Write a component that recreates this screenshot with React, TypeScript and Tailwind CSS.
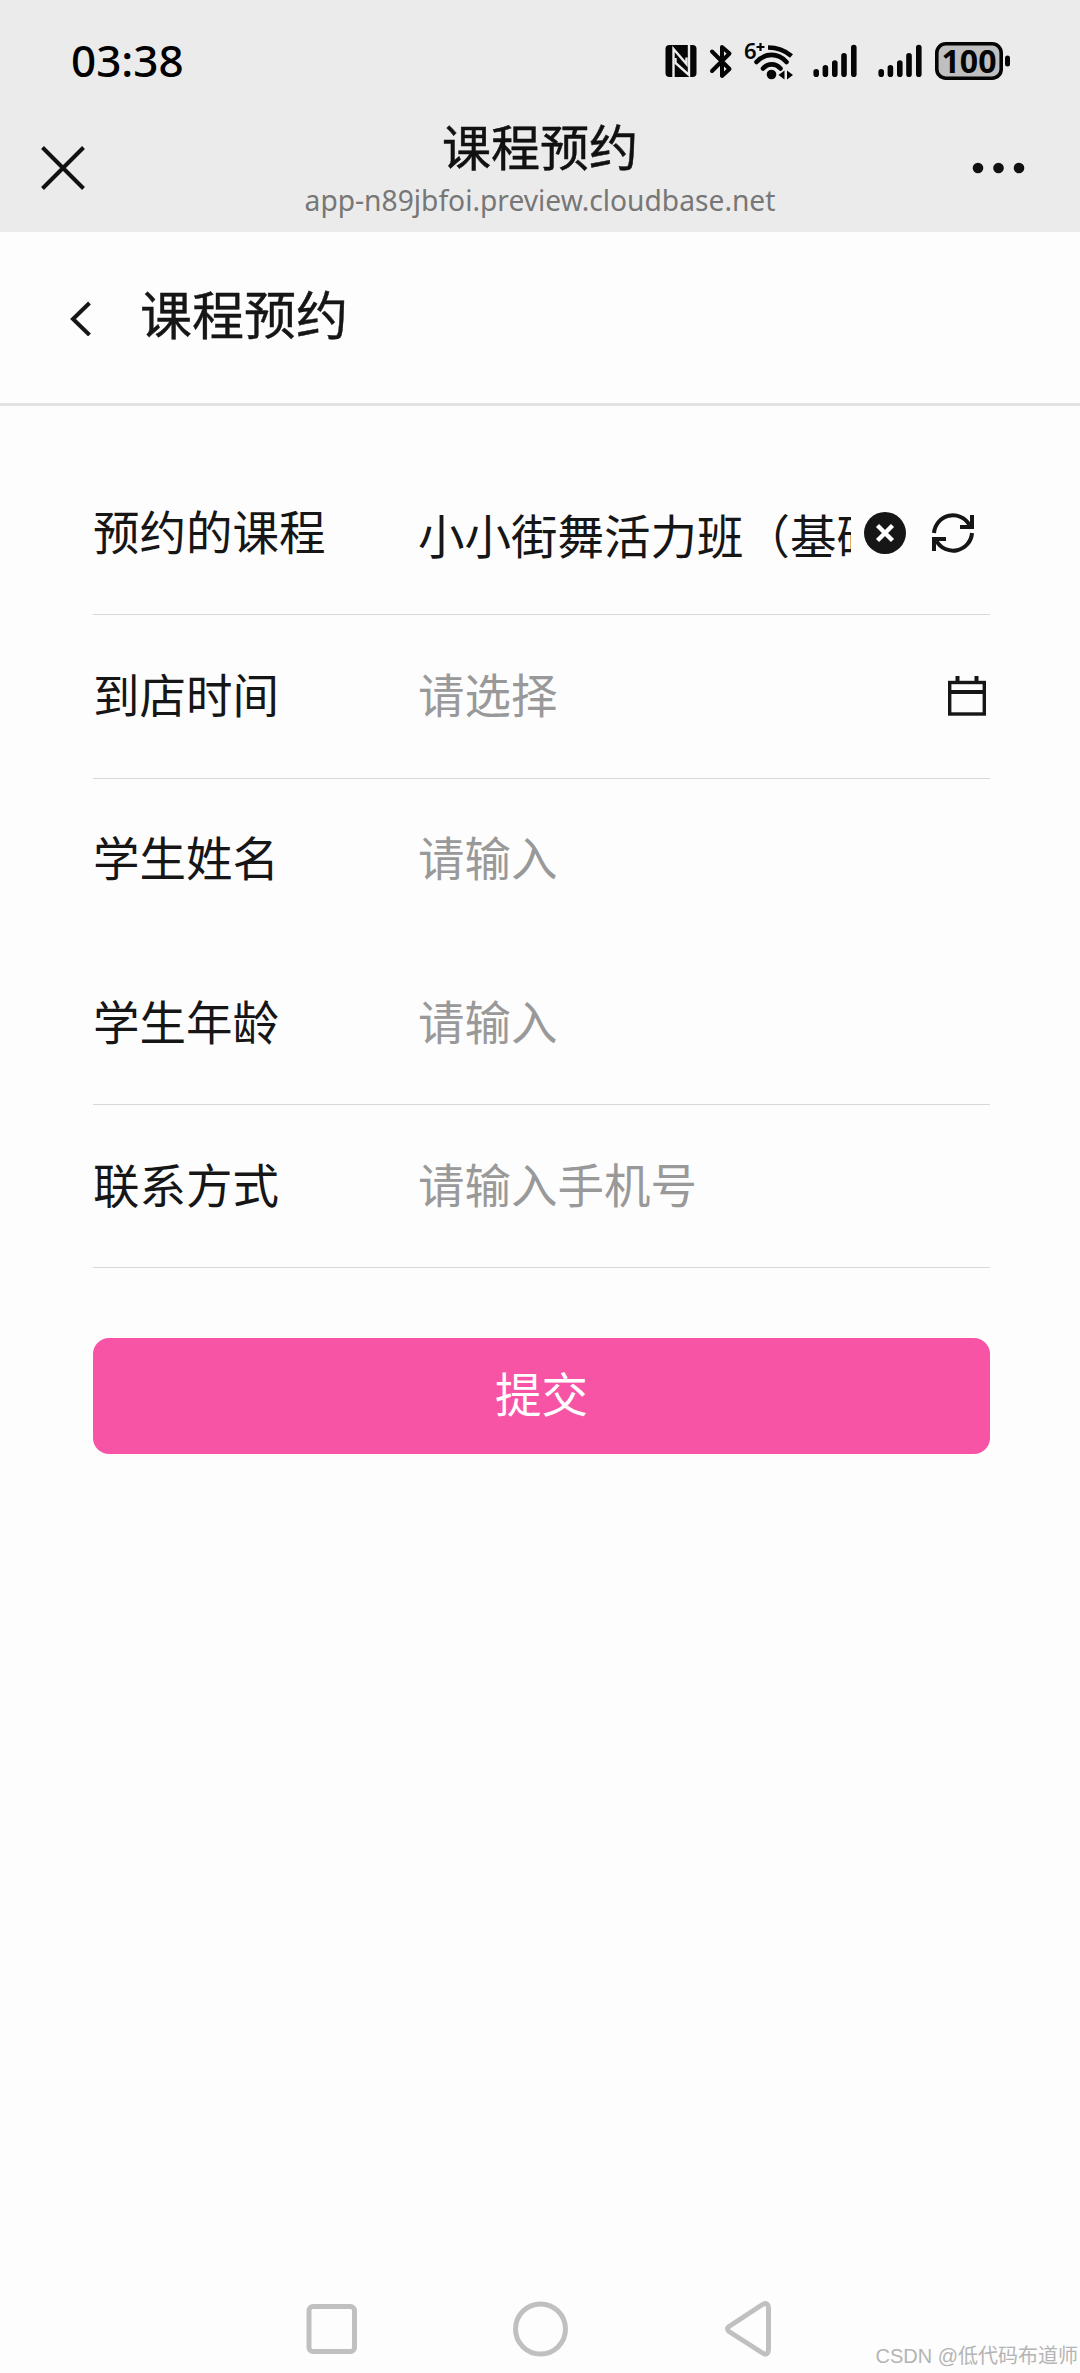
import type { ReactNode } from 'react'

type FieldProps = {
  label: string
  placeholder?: string
  line?: boolean
  children?: ReactNode
}

function SignalIcon() {
  return (
    <svg width="45" height="40" viewBox="0 0 45 40" stroke="#050505" strokeWidth="5.6" strokeLinecap="round">
      <path d="M3.2 31.7V34.3M12.4 27.7V34.3M21.8 23V34.3M31 15.8V34.3M40.8 7.6V34.3" />
    </svg>
  )
}

function StatusBar() {
  return (
    <div className="flex h-[120px] items-center justify-between pl-[71px] pr-[68px]">
      <span className="text-[44px] leading-[60px] font-medium text-black">03:38</span>
      <div className="flex items-center">
        {/* NFC */}
        <svg width="32" height="40" viewBox="0 0 32 40">
          <rect x="0.5" y="5" width="31" height="32" rx="4" fill="#050505" />
          <path d="M8.500 37V9L21.500 24V17.500" fill="none" stroke="#ebebeb" strokeWidth="2.4" />
          <path d="M10.500 18V23L24 35V5" fill="none" stroke="#ebebeb" strokeWidth="2.4" />
        </svg>
        {/* Bluetooth */}
        <svg className="ml-[12px]" width="24" height="40" viewBox="0 0 24 40" fill="none" stroke="#050505" strokeWidth="4" strokeLinecap="round" strokeLinejoin="round">
          <path d="M3 11.500L20.500 29L13 36V7L20.500 13.500L3 31" />
        </svg>
        {/* Wi-Fi 6+ */}
        <svg className="ml-[11px] overflow-visible" width="52" height="40" viewBox="0 0 52 40">
          <g fill="none" stroke="#050505" strokeWidth="4.6">
            <path d="M24 7.500C33 7.500 41 10.500 47.500 16" />
            <path d="M12.500 22C21 12.500 34 12.500 42.500 22" strokeLinecap="round" />
            <path d="M19 28.500C24 23 31.500 23 36.500 28.500" strokeLinecap="round" />
          </g>
          <circle cx="27.500" cy="34.500" r="4.800" fill="#050505" />
          <path d="M40.500 30.500V39.500L34.500 35ZM43 30.500V39.500L49 35Z" fill="#050505" />
          <text x="0" y="18.500" fontSize="22" fontWeight="600" fill="#050505">6</text>
          <path d="M12.500 7H20.500M16.500 3V11" stroke="#050505" strokeWidth="2.200" />
        </svg>
        <div className="ml-[17px]"><SignalIcon /></div>
        <div className="ml-[20px]"><SignalIcon /></div>
        {/* Battery */}
        <svg className="ml-[12px] overflow-visible" width="77" height="44" viewBox="0 0 77 44">
          <rect x="1.800" y="5.800" width="64.400" height="34.400" rx="9" fill="#bfbfbf" stroke="#050505" strokeWidth="3.600" />
          <rect x="70" y="17.500" width="5" height="11" rx="2.500" fill="#050505" />
          <text x="34" y="34.500" textAnchor="middle" fontSize="32" fontWeight="700" fill="#050505">100</text>
        </svg>
      </div>
    </div>
  )
}

function BrowserBar() {
  return (
    <div className="flex h-[112px] items-start pl-[41px] pr-[54px]">
      <div className="flex-1 pt-[26px]">
        <svg width="44" height="44" viewBox="0 0 44 44" stroke="#111" strokeWidth="4">
          <path d="M1.500 1.500L42.500 42.500M42.500 1.500L1.500 42.500" />
        </svg>
      </div>
      <div className="ml-[13px] flex flex-col items-center text-center">
        <div className="text-[49px] leading-[55px] text-[#111] [-webkit-text-stroke:0.5px_#111]">课程预约</div>
        <div className="mt-[2px] text-[28.200px] leading-[46px] text-[#777]">app-n89jbfoi.preview.cloudbase.net</div>
      </div>
      <div className="flex flex-1 justify-end pt-[42px]">
        <svg width="54" height="12" viewBox="0 0 54 12" fill="#111">
          <circle cx="6" cy="6" r="5.300" />
          <circle cx="26.500" cy="6" r="5.300" />
          <circle cx="47" cy="6" r="5.300" />
        </svg>
      </div>
    </div>
  )
}

function Field({ label, placeholder, line = true, children }: FieldProps) {
  return (
    <div className={`flex h-[163.3px] items-center border-b ${line ? 'border-[#d8d8d8]' : 'border-transparent'}`}>
      <div className="w-[325px] shrink-0 pb-[3px] text-[46.500px] leading-[70px] text-[#161616]">{label}</div>
      {placeholder && <div className="flex-1 pb-[3px] text-[46.500px] leading-[70px] text-[#999]">{placeholder}</div>}
      {children}
    </div>
  )
}

export default function App() {
  return (
    <div className="flex h-[2373px] w-[1080px] flex-col overflow-hidden bg-[#fdfdfd] font-['Noto_Sans','Noto_Sans_CJK_SC',sans-serif]">
      <header className="bg-[#ebebeb]">
        <StatusBar />
        <BrowserBar />
      </header>

      {/* Page title */}
      <div className="flex h-[174px] items-center border-b-[3px] border-[#e2e2e2] pl-[70px]">
        <svg width="22" height="36" viewBox="0 0 22 36" fill="none" stroke="#161616" strokeWidth="4">
          <path d="M19.500 3L3 19L19.500 35" />
        </svg>
        <h1 className="ml-[48px] pb-[5px] text-[52px] leading-[76px] text-[#161616] [-webkit-text-stroke:0.4px_#161616]">课程预约</h1>
      </div>

      {/* Form */}
      <main className="flex-1 pt-[46px] pr-[90px] pl-[93px]">
        <Field label="预约的课程">
          <div className="mt-[5px] w-[433px] overflow-hidden text-[46.500px] leading-[70px] whitespace-nowrap text-[#161616]">
            小小街舞活力班（基础）
          </div>
          <svg className="ml-[13px]" width="42" height="42" viewBox="0 0 42 42">
            <circle cx="21" cy="21" r="21" fill="#161616" />
            <path d="M13.500 13.500L28.500 28.500M28.500 13.500L13.500 28.500" stroke="#fff" strokeWidth="4.400" />
          </svg>
          <svg className="ml-[25px]" width="44" height="44" viewBox="0 0 44 44" fill="none" stroke="#161616" strokeWidth="4">
            <path d="M3 22A19 19 0 0 1 38.500 14" />
            <path d="M41 4V16H29" />
            <path d="M41 22A19 19 0 0 1 5.500 30" />
            <path d="M3 40V28H15" />
          </svg>
        </Field>
        <Field label="到店时间" placeholder="请选择">
          <svg className="mr-[4px]" width="38" height="40" viewBox="0 0 38 40" fill="none" stroke="#161616">
            <rect x="1.700" y="6.500" width="34.600" height="31.500" strokeWidth="3.400" />
            <path d="M0 16H38" strokeWidth="3.800" />
            <path d="M9.500 0V7M28.500 0V7" strokeWidth="4" />
          </svg>
        </Field>
        <Field label="学生姓名" placeholder="请输入" line={false} />
        <Field label="学生年龄" placeholder="请输入" />
        <Field label="联系方式" placeholder="请输入手机号" />
        <button className="mt-[70px] h-[116px] w-full rounded-2xl bg-[#f754a6] pb-1 text-[46.500px] text-white">提交</button>
      </main>

      {/* System navigation */}
      <footer className="relative flex h-[88px] items-center justify-between pr-[307px] pl-[306px]">
        <svg width="52" height="58" viewBox="0 0 52 58" fill="none" stroke="#c0c0c0" strokeWidth="5">
          <rect x="3" y="6.500" width="45.500" height="45" rx="4" />
        </svg>
        <svg width="58" height="58" viewBox="0 0 58 58" fill="none" stroke="#c0c0c0" strokeWidth="5">
          <circle cx="27.500" cy="29" r="25" />
        </svg>
        <svg width="48" height="58" viewBox="0 0 48 58" fill="none" stroke="#c0c0c0" strokeWidth="5" strokeLinejoin="round">
          <path d="M37.500 4.500Q43 1.500 43.500 8V49Q43 56.500 37.500 53L4 31.500Q1 29 4 26.500Z" />
        </svg>
        <div className="absolute right-[2px] bottom-[2px] text-[20px] leading-[30px] text-[#b4b4b4] font-['Liberation_Sans','Noto_Sans_CJK_SC',sans-serif]">
          CSDN @低代码布道师
        </div>
      </footer>
    </div>
  )
}
